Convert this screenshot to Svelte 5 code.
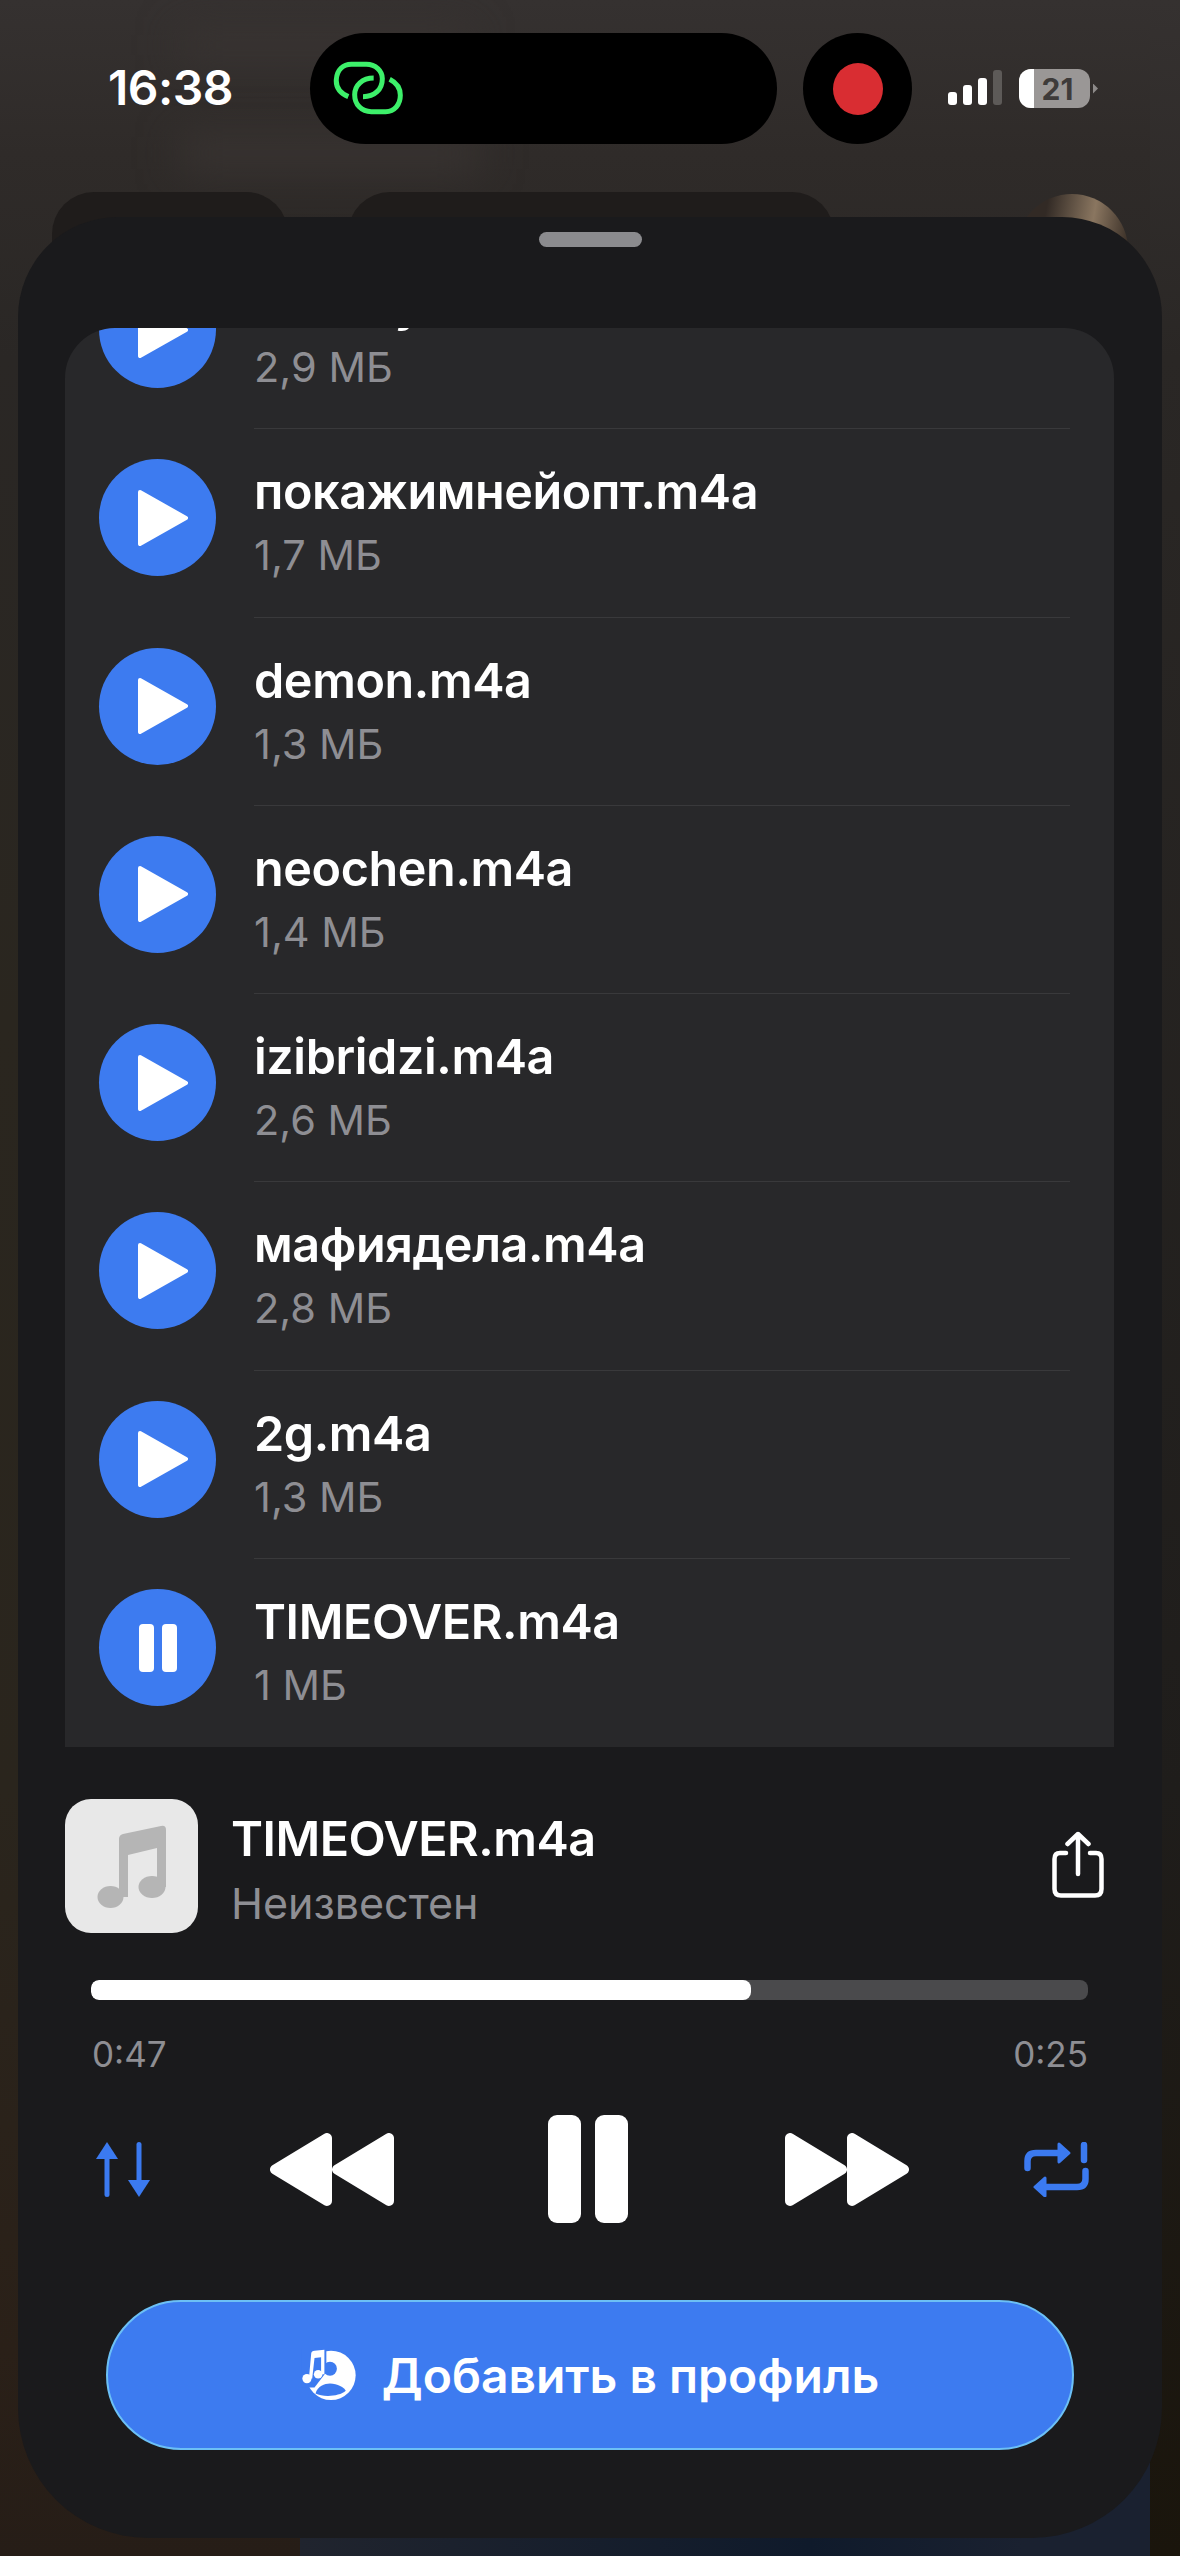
<!-- Audio player sheet over a blurred app, with the status bar on top. -->
<script lang="ts">
  const tracks = [
    { name: "mamay.m4a", size: "2,9 МБ" },
    { name: "покажимнейопт.m4a", size: "1,7 МБ" },
    { name: "demon.m4a", size: "1,3 МБ" },
    { name: "neochen.m4a", size: "1,4 МБ" },
    { name: "izibridzi.m4a", size: "2,6 МБ" },
    { name: "мафиядела.m4a", size: "2,8 МБ" },
    { name: "2g.m4a", size: "1,3 МБ" },
    { name: "TIMEOVER.m4a", size: "1 МБ", playing: true },
  ];
  const progress = 66.2;
</script>

<div class="screen">
  <div class="backdrop" aria-hidden="true">
    <div class="ghost title"></div>
    <div class="ghost sub"></div>
    <div class="edge"></div>
    <div class="floor"></div>
    <div class="tab one"></div>
    <div class="tab two"></div>
    <div class="avatar"></div>
  </div>

  <header class="status">
    <div class="time">16:38</div>
    <div class="island">
      <svg class="link" viewBox="100 125 210 165" fill="none" stroke="#3df06a" stroke-width="15" stroke-linecap="butt">
        <path d="M146 232 C122 222 108 205 110 180 C112 152 130 135 155 135 L200 135 C228 135 248 155 248 178 C248 210 225 232 190 232" />
        <path d="M222 176 C188 176 165 198 165 226 C165 255 185 277 215 277 L258 277 C285 277 302 255 302 228 C302 206 290 190 270 180" />
      </svg>
    </div>
    <div class="rec"><span class="rec-dot"></span></div>
    <div class="signal">
      <span class="s1"></span><span class="s2"></span><span class="s3"></span><span class="s4"></span>
    </div>
    <div class="battery">
      <div class="cell"><span class="charge"></span><span class="pct">21</span></div>
      <span class="nub"></span>
    </div>
  </header>

  <main class="sheet">
    <div class="handle"></div>

    <section class="card">
      <ul class="list">
        {#each tracks as t}
          <li class="row">
            <div class="round">
              {#if t.playing}
                <svg class="glyph-pause" viewBox="0 0 38 48" fill="#fff">
                  <rect x="0" y="0" width="15" height="48" rx="4" />
                  <rect x="23" y="0" width="15" height="48" rx="4" />
                </svg>
              {:else}
                <svg class="glyph-play" viewBox="0 0 50 56" fill="#fff" stroke="#fff" stroke-width="4" stroke-linejoin="round">
                  <path d="M2 2 L48 28 L2 54 Z" />
                </svg>
              {/if}
            </div>
            <div class="info">
              <div class="name">{t.name}</div>
              <div class="size">{t.size}</div>
            </div>
          </li>
        {/each}
      </ul>
    </section>

    <section class="now">
      <div class="art">
        <svg viewBox="0 0 133 134" fill="#b5b5b5">
          <ellipse cx="45.5" cy="98" rx="13" ry="11" />
          <ellipse cx="87" cy="88" rx="13.5" ry="11" />
          <path d="M54 98 L54 40 Q54 36 58 35 L96 27 Q101 26 101 31 L101 88 L92 88 L92 49 L63 56 L63 98 Z" />
        </svg>
      </div>
      <div class="meta">
        <div class="meta-title">TIMEOVER.m4a</div>
        <div class="meta-sub">Неизвестен</div>
      </div>
      <svg class="share" viewBox="0 0 52 67" fill="none" stroke="#fff" stroke-width="4.5" stroke-linecap="round" stroke-linejoin="round">
        <path d="M14 22 L8 22 Q2.5 22 2.5 28 L2.5 58 Q2.5 64.5 9 64.5 L43 64.5 Q49.5 64.5 49.5 58 L49.5 28 Q49.5 22 44 22 L38 22" />
        <path d="M26 43 L26 3 M15.5 13 L26 3 L36.5 13" />
      </svg>
    </section>

    <div class="track"><div class="fill" style="width: {progress}%"></div></div>
    <div class="times"><span>0:47</span><span>0:25</span></div>

    <div class="controls">
      <svg class="sort" viewBox="0 0 54 55" fill="#3b7af0">
        <rect x="8.5" y="10" width="5" height="45" rx="2.5" />
        <path d="M11 0 L22 17 L0 17 Z" />
        <rect x="40.5" y="0" width="5" height="45" rx="2.5" />
        <path d="M43 55 L32 38 L54 38 Z" />
      </svg>
      <svg class="skip back" viewBox="0 0 124 73" fill="#fff" stroke="#fff" stroke-width="10" stroke-linejoin="round">
        <path d="M5 36.5 L57 5 L57 68 Z" />
        <path d="M67 36.5 L119 5 L119 68 Z" />
      </svg>
      <div class="big-pause"><span></span><span></span></div>
      <svg class="skip next" viewBox="0 0 124 73" fill="#fff" stroke="#fff" stroke-width="10" stroke-linejoin="round">
        <path d="M119 36.5 L67 5 L67 68 Z" />
        <path d="M57 36.5 L5 5 L5 68 Z" />
      </svg>
      <svg class="repeat" viewBox="0 0 65 55" fill="none" stroke="#3b7af0" stroke-width="6.5" stroke-linecap="round" stroke-linejoin="round">
        <path d="M3.5 26 L3.5 19 Q3.5 11 12 11 L36 11" />
        <path d="M35 2 L45 11 L35 20 Z" fill="#3b7af0" stroke-width="3" />
        <path d="M61.5 29 L61.5 37 Q61.5 45 53 45 L20 45" />
        <path d="M21 36 L11 45 L21 54 Z" fill="#3b7af0" stroke-width="3" />
        <path d="M60 3 L60 18" />
      </svg>
    </div>

    <button class="add">
      <svg class="add-icon" viewBox="60 145 168 158">
        <circle cx="150" cy="225" r="75" fill="#fff" />
        <path d="M60 145 L136 145 L136 215 L100 262 L60 262 Z" fill="#3d7bf0" />
        <circle cx="147" cy="205" r="21" fill="#3d7bf0" />
        <path d="M103 280 C110 258 130 250 147 250 C170 250 190 262 195 272 C175 290 125 292 103 280 Z" fill="#3d7bf0" />
        <g fill="#fff">
          <circle cx="77" cy="235" r="14" />
          <circle cx="111" cy="222" r="13" />
          <path d="M83 235 L90 158 Q91 150 100 150 L130 147 L130 222 L120 222 L120 170 L100 172 L93 235 Z" />
        </g>
      </svg>
      <span>Добавить в профиль</span>
    </button>
  </main>
</div>

<style>
  :global(body) {
    margin: 0;
    background: #1b1a1c;
  }
  .screen {
    position: relative;
    width: 1180px;
    height: 2556px;
    overflow: hidden;
    font-family: Inter, "Noto Sans", sans-serif;
    color: #fff;
    background: linear-gradient(180deg, #353130 0%, #2f2b29 6%, #2a2725 14%, #2a261f 40%, #2a251d 70%, #2a2018 92%, #261d17 100%);
  }

  .backdrop {
    position: absolute;
    inset: 0;
  }
  .ghost {
    position: absolute;
    background: #393432;
    filter: blur(20px);
  }
  .ghost.title {
    left: 180px;
    top: 30px;
    width: 290px;
    height: 30px;
  }
  .ghost.sub {
    left: 180px;
    top: 135px;
    width: 300px;
    height: 36px;
  }
  .edge {
    position: absolute;
    top: 0;
    right: 0;
    bottom: 0;
    width: 30px;
    background: linear-gradient(180deg, #353130 0%, #2a2725 14%, #1f1d1b 70%, #1a150c 100%);
  }
  .floor {
    position: absolute;
    left: 300px;
    right: 30px;
    bottom: 0;
    height: 130px;
    background: linear-gradient(90deg, #20242e 0%, #0f1a2b 60%, #1a2130 85%);
  }
  .tab {
    position: absolute;
    top: 192px;
    height: 80px;
    background: #1f1c1b;
    border-radius: 42px 42px 0 0;
  }
  .tab.one {
    left: 52px;
    width: 236px;
  }
  .tab.two {
    left: 348px;
    width: 486px;
  }
  .avatar {
    position: absolute;
    left: 1016px;
    top: 194px;
    width: 112px;
    height: 112px;
    border-radius: 50%;
    background: linear-gradient(100deg, #322a25 25%, #8a7660 62%, #3e332a 90%);
  }

  .status {
    position: relative;
    display: flex;
    align-items: center;
    box-sizing: border-box;
    height: 217px;
    padding: 33px 0 73px 108px;
  }
  .time {
    width: 202px;
    margin-top: -2px;
    font-size: 48px;
    font-weight: 600;
    letter-spacing: -0.5px;
  }
  .island {
    display: flex;
    align-items: center;
    flex: none;
    width: 467px;
    height: 111px;
    padding-left: 23px;
    box-sizing: border-box;
    background: #000;
    border-radius: 56px;
  }
  .link {
    width: 70px;
    height: 55px;
  }
  .rec {
    display: flex;
    align-items: center;
    justify-content: center;
    width: 109px;
    height: 111px;
    margin-left: 26px;
    background: #000;
    border-radius: 50%;
  }
  .rec-dot {
    width: 50px;
    height: 52px;
    background: #d92d32;
    border-radius: 50%;
  }
  .signal {
    display: flex;
    align-items: flex-end;
    gap: 6px;
    height: 35px;
    margin: 0 17px 0 36px;
    transform: translateY(-1px);
  }
  .signal span {
    width: 9px;
    background: #fff;
    border-radius: 3px;
  }
  .signal .s1 {
    height: 13px;
  }
  .signal .s2 {
    height: 20px;
  }
  .signal .s3 {
    height: 27px;
  }
  .signal .s4 {
    height: 35px;
    background: #5d5a58;
  }
  .battery {
    display: flex;
    align-items: center;
    gap: 3px;
  }
  .cell {
    position: relative;
    display: flex;
    align-items: center;
    justify-content: center;
    width: 71px;
    height: 39px;
    padding-left: 6px;
    box-sizing: border-box;
    overflow: hidden;
    background: #9a9796;
    border-radius: 12px;
  }
  .charge {
    position: absolute;
    left: 0;
    top: 0;
    bottom: 0;
    width: 15px;
    background: #fff;
  }
  .pct {
    position: relative;
    font-size: 30px;
    font-weight: 700;
    color: #3e3b3a;
  }
  .nub {
    width: 5px;
    height: 10px;
    background: #8d8a89;
    clip-path: polygon(0 0, 100% 50%, 0 100%);
  }

  .sheet {
    position: relative;
    box-sizing: border-box;
    width: 1144px;
    height: 2321px;
    margin: 0 0 0 18px;
    padding-top: 15px;
    background: #1a1a1c;
    border-radius: 100px 100px 130px 130px;
  }
  .handle {
    width: 103px;
    height: 15px;
    margin: 0 auto;
    background: #8b8b8e;
    border-radius: 8px;
  }
  .card {
    height: 1419px;
    margin: 81px 48px 0 47px;
    overflow: hidden;
    background: #28282a;
    border-radius: 50px 50px 0 0;
  }
  .list {
    margin: -87px 0 0;
    padding: 0;
    list-style: none;
  }
  .row {
    display: flex;
    align-items: flex-start;
    height: 188.3px;
    padding: 30px 0 0 34px;
    box-sizing: border-box;
  }
  .round {
    display: flex;
    flex: none;
    align-items: center;
    justify-content: center;
    width: 117px;
    height: 117px;
    margin-right: 38px;
    background: #3d7bf0;
    border-radius: 50%;
  }
  .glyph-play {
    width: 50px;
    height: 56px;
    margin-left: 10px;
  }
  .glyph-pause {
    width: 38px;
    height: 48px;
  }
  .info {
    flex: 1;
    align-self: stretch;
    margin: -30px 44px 0 0;
    padding-top: 34px;
    box-sizing: border-box;
    border-bottom: 1px solid #39393b;
  }
  .row:last-child .info {
    border-bottom: 0;
  }
  .name {
    font-size: 48.5px;
    font-weight: 600;
    line-height: 58px;
    letter-spacing: -0.4px;
  }
  .size {
    margin-top: 10px;
    font-size: 41.5px;
    line-height: 48px;
    color: #8e8e93;
  }

  .now {
    display: flex;
    align-items: center;
    height: 134px;
    margin: 52px 58px 0 47px;
  }
  .art {
    flex: none;
    width: 133px;
    height: 134px;
    margin-right: 33px;
    background: #e8e8e8;
    border-radius: 26px;
  }
  .art svg {
    display: block;
    width: 133px;
    height: 134px;
  }
  .meta {
    flex: 1;
    padding-top: 6px;
  }
  .meta-title {
    font-size: 48.5px;
    font-weight: 600;
    line-height: 58px;
    letter-spacing: -0.5px;
  }
  .meta-sub {
    margin-top: 10px;
    font-size: 43px;
    line-height: 50px;
    color: #8e8e93;
  }
  .share {
    width: 52px;
    height: 67px;
    margin-top: -4px;
  }
  .track {
    height: 20px;
    margin: 47px 74px 0 73px;
    overflow: hidden;
    background: #4a4a4c;
    border-radius: 8px;
  }
  .fill {
    height: 100%;
    background: #fff;
    border-radius: 8px;
  }
  .times {
    display: flex;
    justify-content: space-between;
    margin: 34px 74px 0 74px;
    font-size: 35px;
    line-height: 40px;
    color: #8e8e93;
  }
  .controls {
    display: flex;
    align-items: center;
    height: 108px;
    margin: 41px 0 0 78px;
  }
  .sort {
    width: 54px;
    height: 55px;
  }
  .skip {
    width: 124px;
    height: 73px;
  }
  .skip.back {
    margin: 0 154px 0 120px;
  }
  .skip.next {
    margin: 0 115px 0 157px;
  }
  .big-pause {
    display: flex;
    gap: 14px;
  }
  .big-pause span {
    width: 33px;
    height: 108px;
    background: #fff;
    border-radius: 9px;
  }
  .repeat {
    width: 65px;
    height: 55px;
  }
  .add {
    display: flex;
    align-items: center;
    justify-content: center;
    gap: 25px;
    box-sizing: border-box;
    width: 968px;
    height: 150px;
    margin: 77px 0 0 88px;
    padding: 0;
    color: #fff;
    font-family: inherit;
    font-size: 48px;
    font-weight: 600;
    background: #3d7bf0;
    border: 2px solid #6cc0f5;
    border-radius: 75px;
  }
  .add-icon {
    width: 56px;
    height: 52px;
  }
</style>
